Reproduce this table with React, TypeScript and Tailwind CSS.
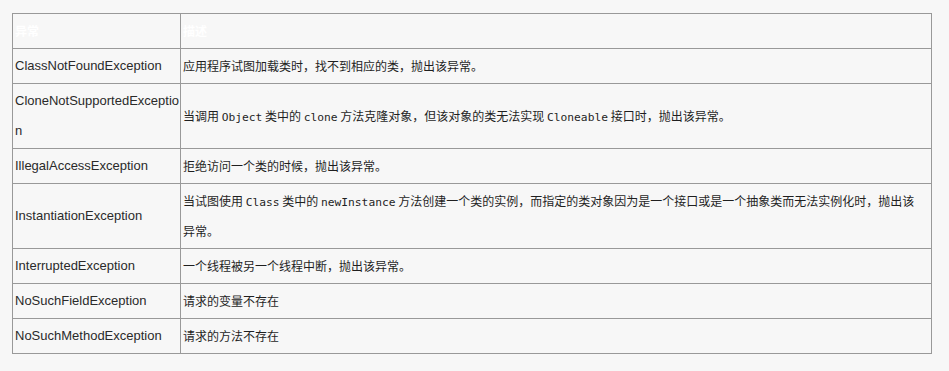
import React from "react";

const mono = "font-['DejaVu_Sans_Mono',monospace] text-[11.25px] leading-none";

function Code({ children }: { children: React.ReactNode }) {
  return <code className={mono}>{children}</code>;
}

type Row = { name: React.ReactNode; desc: React.ReactNode };

const rows: Row[] = [
  { name: "ClassNotFoundException", desc: "应用程序试图加载类时，找不到相应的类，抛出该异常。" },
  {
    name: (
      <>
        CloneNotSupportedExceptio
        <br />n
      </>
    ),
    desc: (
      <>
        当调用 <Code>Object</Code> 类中的 <Code>clone</Code> 方法克隆对象，但该对象的类无法实现 <Code>Cloneable</Code> 接口时，抛出该异常。
      </>
    ),
  },
  { name: "IllegalAccessException", desc: "拒绝访问一个类的时候，抛出该异常。" },
  {
    name: "InstantiationException",
    desc: (
      <>
        当试图使用 <Code>Class</Code> 类中的 <Code>newInstance</Code> 方法创建一个类的实例，而指定的类对象因为是一个接口或是一个抽象类而无法实例化时，抛出该
        <br />
        异常。
      </>
    ),
  },
  { name: "InterruptedException", desc: "一个线程被另一个线程中断，抛出该异常。" },
  { name: "NoSuchFieldException", desc: "请求的变量不存在" },
  { name: "NoSuchMethodException", desc: "请求的方法不存在" },
];

export default function App() {
  return (
    <div className="w-[949px] h-[371px] bg-[#f7f7f7] pt-[13px] pl-[12px] overflow-hidden">
      <table className="w-[920px] table-fixed border-collapse border border-[#999]">
        <colgroup>
          <col className="w-[168px]" />
          <col />
        </colgroup>
        <thead>
          <tr>
            <th className="h-[35px] border border-[#999] px-[2px] py-0 leading-[30px] text-left align-middle text-white font-bold text-[12px] font-['Noto_Sans_CJK_SC',sans-serif]">
              异常
            </th>
            <th className="h-[35px] border border-[#999] px-[2px] py-0 leading-[30px] text-left align-middle text-white font-bold text-[12px] font-['Noto_Sans_CJK_SC',sans-serif]">
              描述
            </th>
          </tr>
        </thead>
        <tbody>
          {rows.map((r, i) => (
            <tr key={i}>
              <td className="border border-[#999] px-[2px] py-[2px] leading-[30px] align-middle text-[#2a2a2a] text-[13px] font-['Liberation_Sans',Arial,sans-serif] whitespace-nowrap overflow-hidden">
                {r.name}
              </td>
              <td className="border border-[#999] px-[2px] py-[2px] leading-[30px] align-middle text-[#1f1f1f] text-[12px] font-['Noto_Sans_CJK_SC','Liberation_Sans',sans-serif] whitespace-nowrap">
                {r.desc}
              </td>
            </tr>
          ))}
        </tbody>
      </table>
    </div>
  );
}
